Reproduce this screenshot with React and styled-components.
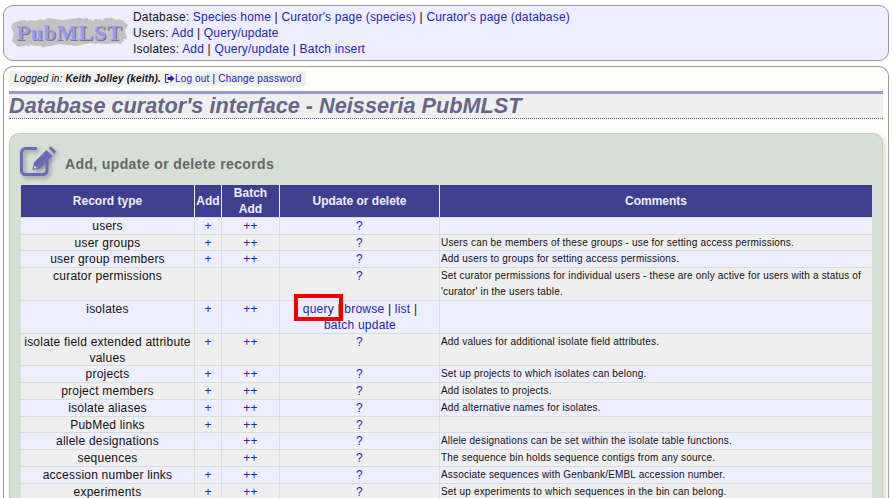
import styled, { createGlobalStyle } from "styled-components";

const GlobalStyle = createGlobalStyle`
  html, body {
    margin: 0;
    height: 498px;
    overflow: hidden;
    background: #fff;
    font-family: "Liberation Sans", Arial, sans-serif;
    font-size: 12px;
    color: #111;
  }
`;

const Page = styled.div`
  padding: 5px 4px 0 3px;
`;

const TopBox = styled.header`
  display: flex;
  align-items: center;
  gap: 4px;
  height: 54px;
  padding: 0 6px;
  background: #eeeeff;
  border: 1px solid #999;
  border-radius: 10px;
`;

const Logo = styled.div`
  position: relative;
  width: 119px;
  height: 32px;
  flex: none;
  display: flex;
  align-items: center;
  justify-content: center;
`;

const LogoBlob = styled.svg`
  position: absolute;
  inset: 0;
  overflow: visible;
`;

const LogoText = styled.span`
  position: relative;
  font-family: "Liberation Serif", serif;
  font-weight: bold;
  font-size: 22px;
  letter-spacing: 0.8px;
  color: #9a9af0;
  text-shadow: 1px 1px 0 #777;
`;

const NavLines = styled.div`
  font-size: 12px;
  line-height: 16px;
  letter-spacing: 0.18px;
`;

const A = styled.a`
  color: #2222bb;
  text-decoration: none;
`;

const MainBox = styled.main`
  margin-top: 5px;
  height: 440px;
  padding: 4px 5px 0;
  background: #fdfef9;
  border: 1px solid #999;
  border-bottom: none;
  border-radius: 10px 10px 0 0;
`;

const LoginBar = styled.div`
  display: inline-block;
  height: 15px;
  padding: 0 4px 0 5px;
  line-height: 15px;
  font-size: 10px;
  letter-spacing: 0.18px;
  background: #f0f0f0;
`;

const LogoutGlyph = styled.svg`
  vertical-align: -1px;
  margin-left: 4px;
`;

const Heading = styled.h1`
  margin: 5px 0 0;
  height: 24px;
  border-top: 3px solid #9999cc;
  border-bottom: 1px dotted #6666aa;
  background: #efefef;
  font-size: 21.7px;
  font-style: italic;
  font-weight: bold;
  line-height: 24px;
  color: #666688;
`;

const Panel = styled.section`
  margin-top: 14px;
  height: 400px;
  padding: 12px 10px 0 11px;
  background: #d5dfd5;
  border: 1px solid #c8c8c4;
  border-bottom: none;
  border-radius: 10px 10px 0 0;
  box-shadow: 3px 3px 5px #ddd;
`;

const PanelTitle = styled.h2`
  display: flex;
  align-items: flex-start;
  gap: 8px;
  height: 39px;
  margin: 0 0 0 -1px;
  font-size: 14px;
  letter-spacing: 0.37px;
  color: #666;
`;

const EditIcon = styled.svg`
  flex: none;
  filter: drop-shadow(2px 2px 2px rgba(0, 0, 0, 0.35));
`;

const TitleText = styled.span`
  margin-top: 10px;
`;

const RecordTable = styled.table`
  width: 851px;
  table-layout: fixed;
  border-collapse: separate;
  border-spacing: 0;
`;

const Th = styled.th`
  height: 32px;
  padding: 0;
  background: #3f3f8f;
  color: #eef;
  font-size: 12px;
  line-height: 16px;
  border-left: ${(p) => (p.$first ? "none" : "1px solid #eef")};
`;

const Row = styled.tr`
  background: ${(p) => (p.$odd ? "#eeeeff" : "#efefef")};
`;

const Td = styled.td`
  padding: 0 2px;
  text-align: center;
  vertical-align: top;
  font-size: 12px;
  line-height: 16px;
  letter-spacing: 0.22px;
  border-top: 1px solid #d5dfd5;
  border-left: ${(p) => (p.$first ? "none" : "1px solid #d5dfd5")};
`;

const Comment = styled(Td)`
  padding-left: 1px;
  text-align: left;
  font-size: 10px;
  letter-spacing: 0.18px;
`;

// rows in the reference are a little under 17px apart
const CellBody = styled.div`
  margin-bottom: -0.27px;
`;

const QueryLinks = styled(CellBody)`
  position: relative;
  padding-left: 1px;
`;

const Highlight = styled.span`
  position: absolute;
  left: 12px;
  top: -7px;
  width: 41px;
  height: 19px;
  border: 4px solid #f00000;
`;

const rows = [
  ["users", true, true, ""],
  ["user groups", true, true, "Users can be members of these groups - use for setting access permissions."],
  ["user group members", true, true, "Add users to groups for setting access permissions."],
  ["curator permissions", false, false, "Set curator permissions for individual users - these are only active for users with a status of 'curator' in the users table."],
  ["isolates", true, true, "", true],
  ["isolate field extended attribute values", true, true, "Add values for additional isolate field attributes."],
  ["projects", true, true, "Set up projects to which isolates can belong."],
  ["project members", true, true, "Add isolates to projects."],
  ["isolate aliases", true, true, "Add alternative names for isolates."],
  ["PubMed links", true, true, ""],
  ["allele designations", false, true, "Allele designations can be set within the isolate table functions."],
  ["sequences", false, true, "The sequence bin holds sequence contigs from any source."],
  ["accession number links", true, true, "Associate sequences with Genbank/EMBL accession number."],
  ["experiments", true, true, "Set up experiments to which sequences in the bin can belong."],
];

function App() {
  return (
    <Page>
      <GlobalStyle />
      <TopBox>
        <Logo>
          <LogoBlob width="119" height="32" viewBox="0 0 119 32">
            <defs>
              <filter id="rough" x="-5%" y="-10%" width="110%" height="120%">
                <feTurbulence type="fractalNoise" baseFrequency="0.25" numOctaves="2" seed="4" result="n" />
                <feDisplacementMap in="SourceGraphic" in2="n" scale="3" result="d" />
                <feColorMatrix in="n" type="matrix" values="0 0 0 0 0.5  0 0 0 0 0.5  0 0 0 0 0.5  0 0 0 0.9 -0.25" result="m" />
                <feComposite in="m" in2="d" operator="in" result="t" />
                <feMerge>
                  <feMergeNode in="d" />
                  <feMergeNode in="t" />
                </feMerge>
              </filter>
            </defs>
            <path
              filter="url(#rough)"
              d="M3 6 L12 3 L24 4 L36 1 L52 3 L68 1 L84 3 L98 1 L112 3 L118 8 L115 15 L117 22 L110 26 L96 27 L80 26 L66 29 L50 27 L34 30 L20 28 L8 30 L2 24 L4 16 L1 10 Z"
              fill="#c4c4c4"
            />
          </LogoBlob>
          <LogoText>PubMLST</LogoText>
        </Logo>
        <NavLines>
          <div>
            Database: <A href="#">Species home</A> | <A href="#">Curator's page (species)</A> |{" "}
            <A href="#">Curator's page (database)</A>
          </div>
          <div>
            Users: <A href="#">Add</A> | <A href="#">Query/update</A>
          </div>
          <div>
            Isolates: <A href="#">Add</A> | <A href="#">Query/update</A> | <A href="#">Batch insert</A>
          </div>
        </NavLines>
      </TopBox>
      <MainBox>
        <LoginBar>
          <i>
            Logged in: <b>Keith Jolley (keith).</b>
          </i>
          <LogoutGlyph width="10" height="9" viewBox="0 0 10 9">
            <path d="M3.5 .5H.5V8.500H3.500" fill="none" stroke="#2222bb" />
            <path d="M2.500 3H5.500V.8L9.500 4.500L5.500 8.200V6H2.500Z" fill="#2222bb" />
          </LogoutGlyph>
          <A href="#">Log out</A> | <A href="#">Change password</A>
        </LoginBar>
        <Heading>Database curator's interface - Neisseria PubMLST</Heading>
        <Panel>
          <PanelTitle>
            <EditIcon width="37" height="31" viewBox="0 0 37 31">
              <path d="M17 2.500H6Q1.500 2.500 1.500 7V24Q1.500 28.500 6 28.500H22.500Q27 28.500 27 24V15" fill="none" stroke="#6a6ab8" strokeWidth="3" />
              <path d="M12.500 24L14 16.500L26.500 4L32.500 10L20 22.500Z" fill="#6a6ab8" />
              <path d="M28.500 2L31 0.500L36 5.500L34.500 8Z" fill="#6a6ab8" />
              <path d="M14.500 19.500L17 22L13.800 22.800Z" fill="#d5dfd5" />
            </EditIcon>
            <TitleText>Add, update or delete records</TitleText>
          </PanelTitle>
          <RecordTable>
            <colgroup>
              <col width="173" />
              <col width="27" />
              <col width="58" />
              <col width="160" />
              <col />
            </colgroup>
            <thead>
              <tr>
                <Th $first>Record type</Th>
                <Th>Add</Th>
                <Th>
                  Batch
                  <br />
                  Add
                </Th>
                <Th>Update or delete</Th>
                <Th>Comments</Th>
              </tr>
            </thead>
            <tbody>
              {rows.map(([name, add, batch, comment, isIsolates], i) => (
                <Row key={name} $odd={i % 2 === 0}>
                  <Td $first>
                    <CellBody>{name}</CellBody>
                  </Td>
                  <Td>
                    <CellBody>{add && <A href="#">+</A>}</CellBody>
                  </Td>
                  <Td>
                    <CellBody>{batch && <A href="#">++</A>}</CellBody>
                  </Td>
                  <Td>
                    {isIsolates ? (
                      <QueryLinks>
                        <A href="#">query</A> | <A href="#">browse</A> | <A href="#">list</A> |
                        <br />
                        <A href="#">batch update</A>
                        <Highlight />
                      </QueryLinks>
                    ) : (
                      <CellBody>
                        <A href="#">?</A>
                      </CellBody>
                    )}
                  </Td>
                  <Comment>
                    <CellBody>{comment}</CellBody>
                  </Comment>
                </Row>
              ))}
            </tbody>
          </RecordTable>
        </Panel>
      </MainBox>
    </Page>
  );
}

export default App;
